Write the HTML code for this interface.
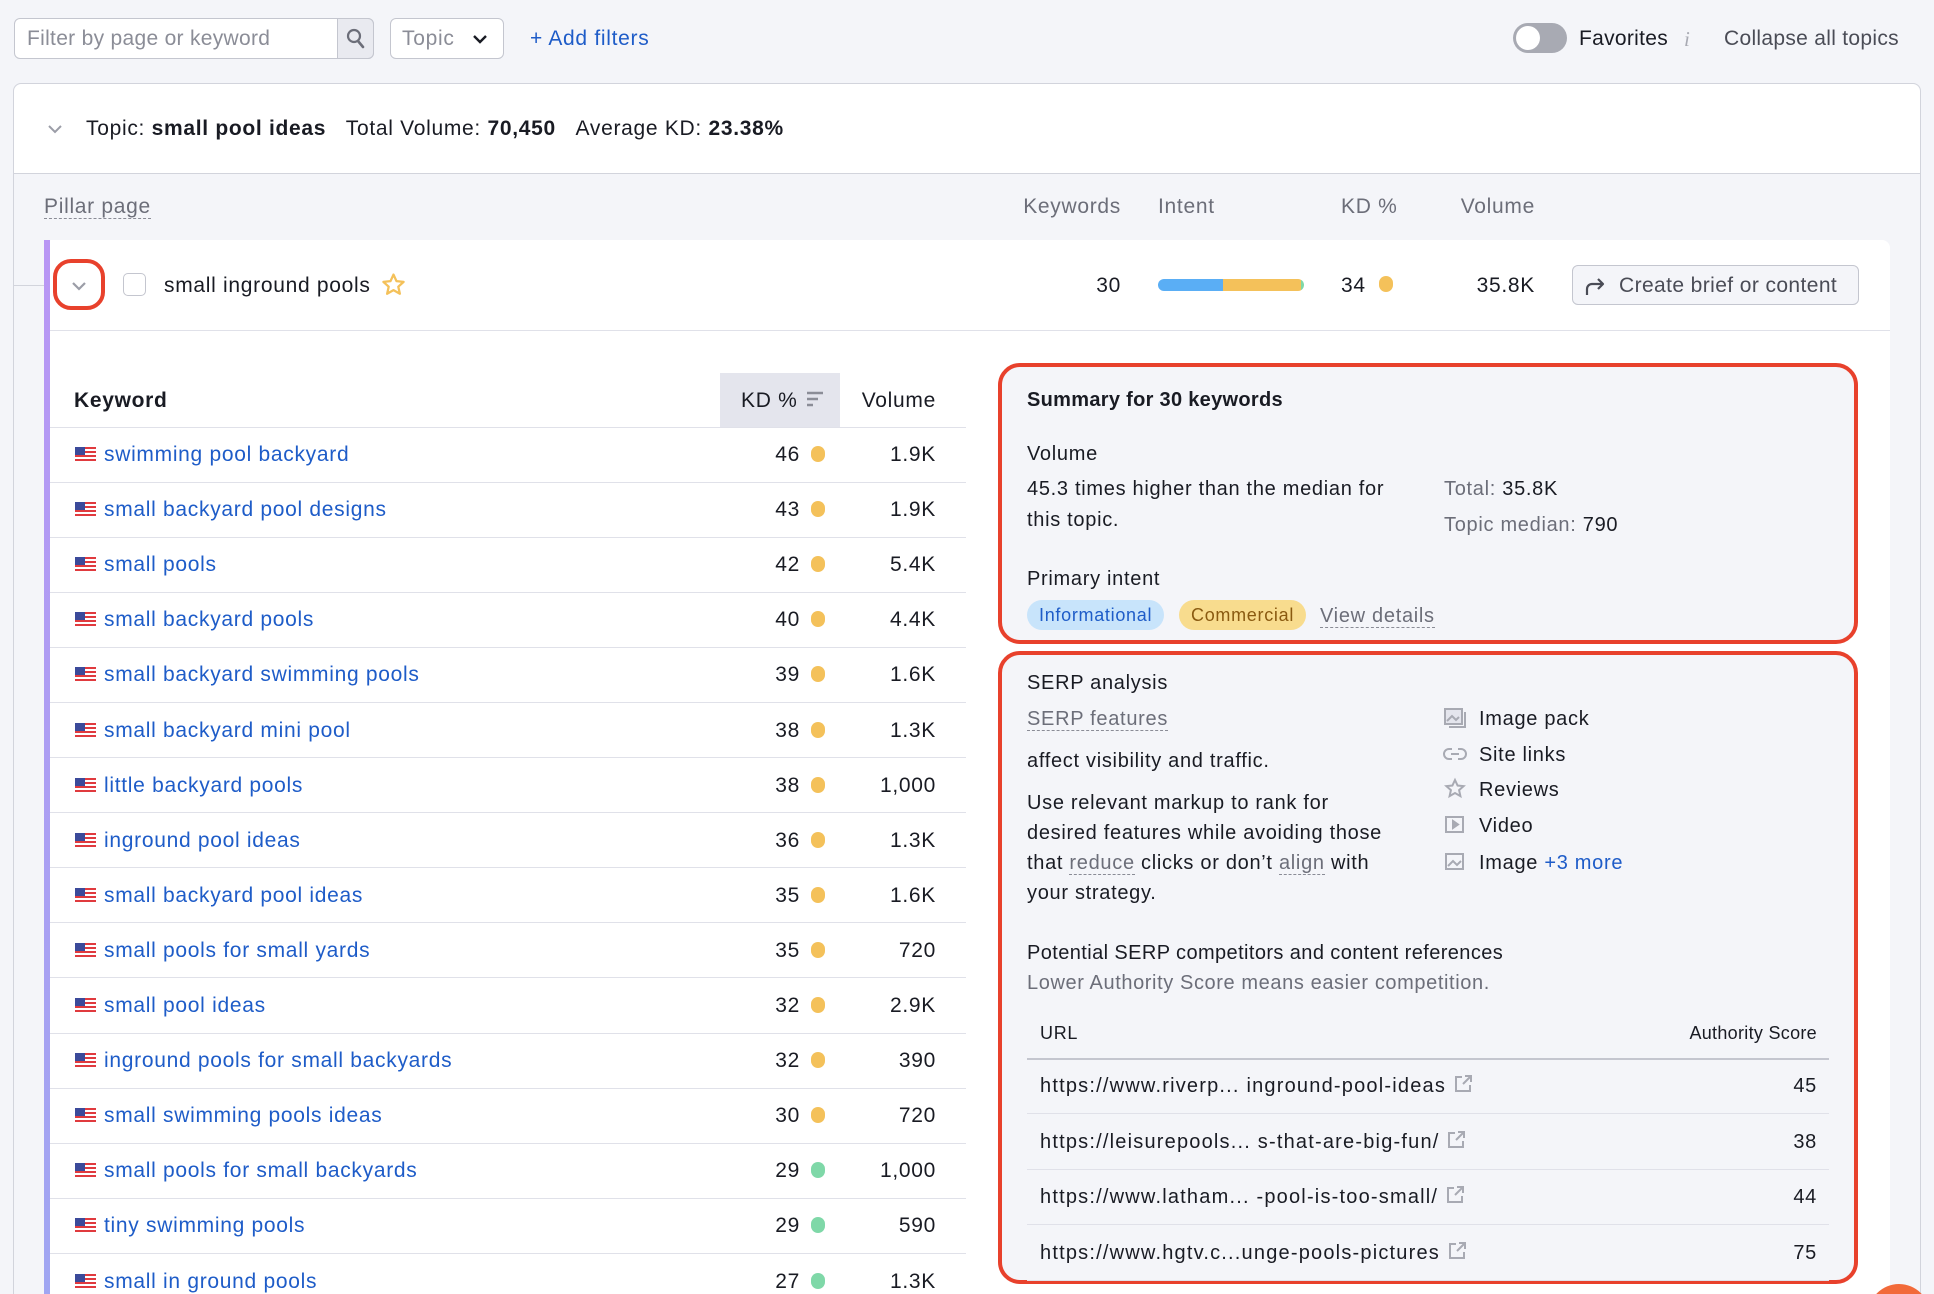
<!DOCTYPE html>
<html style="width:1934px;height:1294px;overflow:hidden"><head><meta charset="utf-8"><style>
*{margin:0;padding:0;box-sizing:border-box}
body{width:1934px;height:1294px;overflow:hidden;background:#f4f5f9;font-family:"Liberation Sans",sans-serif;color:#191b23;font-size:20px;position:relative;letter-spacing:0.7px}
.a{position:absolute;white-space:nowrap;line-height:24px}
.r{text-align:right}
.g{color:#6c6e79}
.lk{color:#1e5cc8}
.dot{position:absolute;width:14px;height:16px;border-radius:8px}
.y{background:#f4c15a}.gr{background:#7fd8a8}
.flag{position:absolute;width:21px;height:15px;background:repeating-linear-gradient(#e03a3e 0 2px,#fff 2px 4px)}
.flag:before{content:"";position:absolute;left:0;top:0;width:10px;height:8px;background:#3b4a9a}
.hl{position:absolute;height:1px;background:#e0e1e9}
.dash{border-bottom:1.5px dashed #8a8c96}
</style></head><body>

<!-- top bar -->
<div style="position:absolute;left:14px;top:18px;width:360px;height:41px;border:1px solid #c4c6cf;border-radius:6px;background:#fff"></div>
<div style="position:absolute;left:337px;top:18px;width:37px;height:41px;border:1px solid #c4c6cf;border-radius:0 6px 6px 0;background:#e9eaf0"></div>
<svg style="position:absolute;left:345px;top:27px" width="22" height="24" viewBox="0 0 22 24"><circle cx="9" cy="9" r="6" fill="none" stroke="#6c6e79" stroke-width="2.2"/><path d="M13 14l5 6" stroke="#6c6e79" stroke-width="2.6" stroke-linecap="round"/></svg>
<div class="a g" style="left:27px;top:27px;font-size:21px;color:#8b8d97;letter-spacing:0.3px">Filter by page or keyword</div>
<div style="position:absolute;left:390px;top:18px;width:114px;height:41px;border:1px solid #c4c6cf;border-radius:6px;background:#fff"></div>
<div class="a" style="left:402px;top:27px;font-size:21px;color:#8b8d97">Topic</div>
<svg style="position:absolute;left:472px;top:33px" width="16" height="12"><path d="M2 3l6 6 6-6" fill="none" stroke="#191b23" stroke-width="2.4"/></svg>
<div class="a lk" style="left:530px;top:27px;font-size:21px">+ Add filters</div>
<div style="position:absolute;left:1513px;top:23px;width:54px;height:30px;border-radius:15px;background:#a8aab3"></div>
<div style="position:absolute;left:1516px;top:26px;width:24px;height:24px;border-radius:12px;background:#fff"></div>
<div class="a" style="left:1579px;top:27px;font-size:21px;letter-spacing:0.3px">Favorites</div>
<div class="a" style="left:1684px;top:27px;font-size:21px;color:#a8aab3;font-style:italic;font-family:'Liberation Serif',serif">i</div>
<div class="a" style="left:1724px;top:27px;font-size:21px;color:#4a4c56;letter-spacing:0.3px">Collapse all topics</div>

<!-- card -->
<div style="position:absolute;left:13px;top:83px;width:1908px;height:1230px;border:1.5px solid #d2d4dc;border-radius:8px;background:#f4f5f9"></div>
<div style="position:absolute;left:14px;top:84px;width:1906px;height:90px;background:#fff;border-radius:8px 8px 0 0;border-bottom:1.5px solid #d2d4dc"></div>
<svg style="position:absolute;left:47px;top:123px" width="16" height="12"><path d="M2 3l6 6 6-6" fill="none" stroke="#9b9da7" stroke-width="2"/></svg>
<div class="a" style="left:86px;top:117px;font-size:21px">Topic: <b>small pool ideas</b>&nbsp;&nbsp;&nbsp;Total Volume: <b>70,450</b>&nbsp;&nbsp;&nbsp;Average KD: <b>23.38%</b></div>

<div class="a g" style="left:44px;top:195px;font-size:21px"><span class="dash">Pillar page</span></div>
<div class="a g r" style="left:0;width:1121px;top:195px;font-size:21px">Keywords</div>
<div class="a g" style="left:1158px;top:195px;font-size:21px">Intent</div>
<div class="a g" style="left:1341px;top:195px;font-size:21px">KD %</div>
<div class="a g r" style="left:0;width:1535px;top:195px;font-size:21px">Volume</div>

<div class="hl" style="left:13px;top:285px;width:31px;background:#d2d4dc"></div>
<!-- pillar card -->
<div style="position:absolute;left:44px;top:240px;width:1846px;height:1060px;background:#fff;border-radius:8px 8px 0 0;border-left:6px solid;border-image:linear-gradient(#b996f4,#a0a6f2) 1"></div>
<div class="hl" style="left:50px;top:330px;width:1840px"></div>
<div style="position:absolute;left:53px;top:259px;width:52px;height:51px;border:4px solid #e8412c;border-radius:18px"></div>
<svg style="position:absolute;left:71px;top:280px" width="16" height="12"><path d="M2 3l6 6 6-6" fill="none" stroke="#9b9da7" stroke-width="2.2"/></svg>
<div style="position:absolute;left:123px;top:273px;width:23px;height:23px;border:1.5px solid #c4c6cf;border-radius:5px"></div>
<div class="a" style="left:164px;top:274px;font-size:21px">small inground pools</div>
<svg style="position:absolute;left:381px;top:272px" width="25" height="25" viewBox="0 0 24 24"><path d="M12 2.5l2.9 6.3 6.8.7-5.1 4.6 1.5 6.8L12 17.4l-6.1 3.5 1.5-6.8L2.3 9.5l6.8-.7z" fill="none" stroke="#f4c15a" stroke-width="2.2" stroke-linejoin="round"/></svg>
<div class="a r" style="left:0;width:1121px;top:274px;font-size:21px">30</div>
<div style="position:absolute;left:1158px;top:279px;width:146px;height:12px;border-radius:6px;overflow:hidden;display:flex"><div style="width:65px;background:#5aaef5"></div><div style="width:78px;background:#f4c15a"></div><div style="width:3px;background:#7fd8a8"></div></div>
<div class="a" style="left:1341px;top:274px;font-size:21px">34</div>
<div class="dot y" style="left:1379px;top:276px"></div>
<div class="a r" style="left:0;width:1535px;top:274px;font-size:21px">35.8K</div>
<div style="position:absolute;left:1572px;top:265px;width:287px;height:40px;border:1.5px solid #c4c6cf;border-radius:6px;background:#f4f5f9"></div>
<svg style="position:absolute;left:1583px;top:274px" width="24" height="24" viewBox="0 0 24 24"><path d="M4 21v-6a5 5 0 0 1 5-5h11M15 5l5 5-5 5" fill="none" stroke="#4a4c56" stroke-width="2.2" stroke-linejoin="round"/></svg>
<div class="a" style="left:1619px;top:274px;font-size:21px;color:#4a4c56;letter-spacing:0.4px">Create brief or content</div>

<!-- keyword table -->
<div style="position:absolute;left:720px;top:373px;width:120px;height:54px;background:#e4e5ed"></div>
<div class="a" style="left:74px;top:389px;font-size:21px;font-weight:bold">Keyword</div>
<div class="a" style="left:741px;top:389px;font-size:21px">KD %</div>
<svg style="position:absolute;left:806px;top:391px" width="18" height="16"><path d="M1 2h16M1 8h11M1 14h6" stroke="#8b8d97" stroke-width="2.5"/></svg>
<div class="a r" style="left:0;width:936px;top:389px;font-size:21px">Volume</div>
<div class="hl" style="left:50px;top:427px;width:916px"></div>
<div id="rows"></div>

<!-- summary box -->
<div style="position:absolute;left:998px;top:363px;width:860px;height:281px;border:4px solid #e8412c;border-radius:22px;background:#f4f5f9"></div>
<div class="a" style="left:1027px;top:388px;font-weight:bold;letter-spacing:0.3px">Summary for 30 keywords</div>
<div class="a" style="left:1027px;top:442px">Volume</div>
<div class="a" style="left:1027px;top:477px">45.3 times higher than the median for</div>
<div class="a" style="left:1027px;top:508px">this topic.</div>
<div class="a" style="left:1444px;top:477px"><span class="g">Total:</span> 35.8K</div>
<div class="a" style="left:1444px;top:513px"><span class="g">Topic median:</span> 790</div>
<div class="a" style="left:1027px;top:567px">Primary intent</div>
<div class="a" style="left:1027px;top:600px;height:30px;line-height:30px;padding:0 12px;border-radius:15px;background:#c8e4fb;color:#1e5cc8;font-size:18px">Informational</div>
<div class="a" style="left:1179px;top:600px;height:30px;line-height:30px;padding:0 12px;border-radius:15px;background:#f8dc8e;color:#8a5a10;font-size:18px">Commercial</div>
<div class="a g" style="left:1320px;top:604px"><span class="dash">View details</span></div>

<!-- serp box -->
<div style="position:absolute;left:998px;top:651px;width:860px;height:633px;border:4px solid #e8412c;border-radius:22px;background:#f4f5f9"></div>
<div class="a" style="left:1027px;top:671px">SERP analysis</div>
<div class="a g" style="left:1027px;top:707px"><span class="dash">SERP features</span></div>
<div class="a" style="left:1027px;top:749px">affect visibility and traffic.</div>
<div class="a" style="left:1027px;top:791px">Use relevant markup to rank for</div>
<div class="a" style="left:1027px;top:821px">desired features while avoiding those</div>
<div class="a" style="left:1027px;top:851px">that <span class="g dash">reduce</span> clicks or don’t <span class="g dash">align</span> with</div>
<div class="a" style="left:1027px;top:881px">your strategy.</div>
<svg style="position:absolute;left:1443px;top:706px" width="24" height="180" viewBox="0 0 24 180" fill="none" stroke="#a8aab3" stroke-width="2">
<rect x="2" y="3" width="17" height="15" fill="#e4e5ed"/><path d="M22 6v15H6"/><path d="M4 15l5-5 4 4 3-3"/>
<path d="M9 53h-3a5 5 0 0 1 0-10h3M15 43h3a5 5 0 0 1 0 10h-3M8 48h8"/>
<path d="M12 74l2.6 5.5 6 .6-4.5 4 1.3 6L12 87l-5.4 3.1 1.3-6-4.5-4 6-.6z"/>
<rect x="3" y="111" width="17" height="15"/><path d="M10 115l5 3.5-5 3.5z" fill="#a8aab3"/>
<rect x="3" y="148" width="17" height="15"/><path d="M5 160l5-5 4 4 4-4"/>
</svg>
<div class="a" style="left:1479px;top:707px">Image pack</div>
<div class="a" style="left:1479px;top:743px">Site links</div>
<div class="a" style="left:1479px;top:778px">Reviews</div>
<div class="a" style="left:1479px;top:814px">Video</div>
<div class="a" style="left:1479px;top:851px">Image <span class="lk">+3 more</span></div>
<div class="a" style="left:1027px;top:941px;letter-spacing:0.4px">Potential SERP competitors and content references</div>
<div class="a g" style="left:1027px;top:971px;letter-spacing:0.6px">Lower Authority Score means easier competition.</div>
<div class="a" style="left:1040px;top:1021px;font-size:18px">URL</div>
<div class="a r" style="left:0;width:1817px;top:1021px;font-size:18px;letter-spacing:0.3px">Authority Score</div>
<div class="hl" style="left:1027px;top:1058px;width:802px;height:2px;background:#c4c6cf"></div>
<div id="urls"></div>

<div style="position:absolute;left:1868px;top:1284px;width:62px;height:62px;border-radius:31px;background:#f26a3a"></div>

<script>
var k=[["swimming pool backyard",46,"1.9K"],["small backyard pool designs",43,"1.9K"],["small pools",42,"5.4K"],["small backyard pools",40,"4.4K"],["small backyard swimming pools",39,"1.6K"],["small backyard mini pool",38,"1.3K"],["little backyard pools",38,"1,000"],["inground pool ideas",36,"1.3K"],["small backyard pool ideas",35,"1.6K"],["small pools for small yards",35,"720"],["small pool ideas",32,"2.9K"],["inground pools for small backyards",32,"390"],["small swimming pools ideas",30,"720"],["small pools for small backyards",29,"1,000"],["tiny swimming pools",29,"590"],["small in ground pools",27,"1.3K"]];
var h="";k.forEach(function(r,i){var c=454+i*55.1;var t=c-11;
h+='<div class="flag" style="left:75px;top:'+(c-7)+'px"></div><div class="a lk" style="left:104px;top:'+t+'px;font-size:21px">'+r[0]+'</div><div class="a r" style="left:0;width:800px;top:'+t+'px;font-size:21px">'+r[1]+'</div><div class="dot '+(r[1]<30?'gr':'y')+'" style="left:811px;top:'+(c-8)+'px"></div><div class="a r" style="left:0;width:936px;top:'+t+'px;font-size:21px">'+r[2]+'</div>';
if(i<15)h+='<div class="hl" style="left:50px;top:'+Math.round(c+27.5)+'px;width:916px"></div>';});
document.getElementById("rows").outerHTML=h;
var u=[["https://www.riverp... inground-pool-ideas",45],["https://leisurepools... s-that-are-big-fun/",38],["https://www.latham... -pool-is-too-small/",44],["https://www.hgtv.c...unge-pools-pictures",75]];
var g="";u.forEach(function(r,i){var c=1085+i*55.5,t=c-11;
g+='<div class="a" style="left:1040px;top:'+t+'px;letter-spacing:1.2px">'+r[0]+' <svg width="20" height="20" viewBox="0 0 20 20" style="vertical-align:-2px" fill="none" stroke="#a8aab3" stroke-width="2"><path d="M9 3H3v14h14v-6M12 2h6v6M18 2l-8 8"/></svg></div><div class="a r" style="left:0;width:1817px;top:'+t+'px">'+r[1]+'</div>';
if(i<4)g+='<div class="hl" style="left:1027px;top:'+Math.round(c+28)+'px;width:802px"></div>';});
document.getElementById("urls").outerHTML=g;
</script>
</body></html>
